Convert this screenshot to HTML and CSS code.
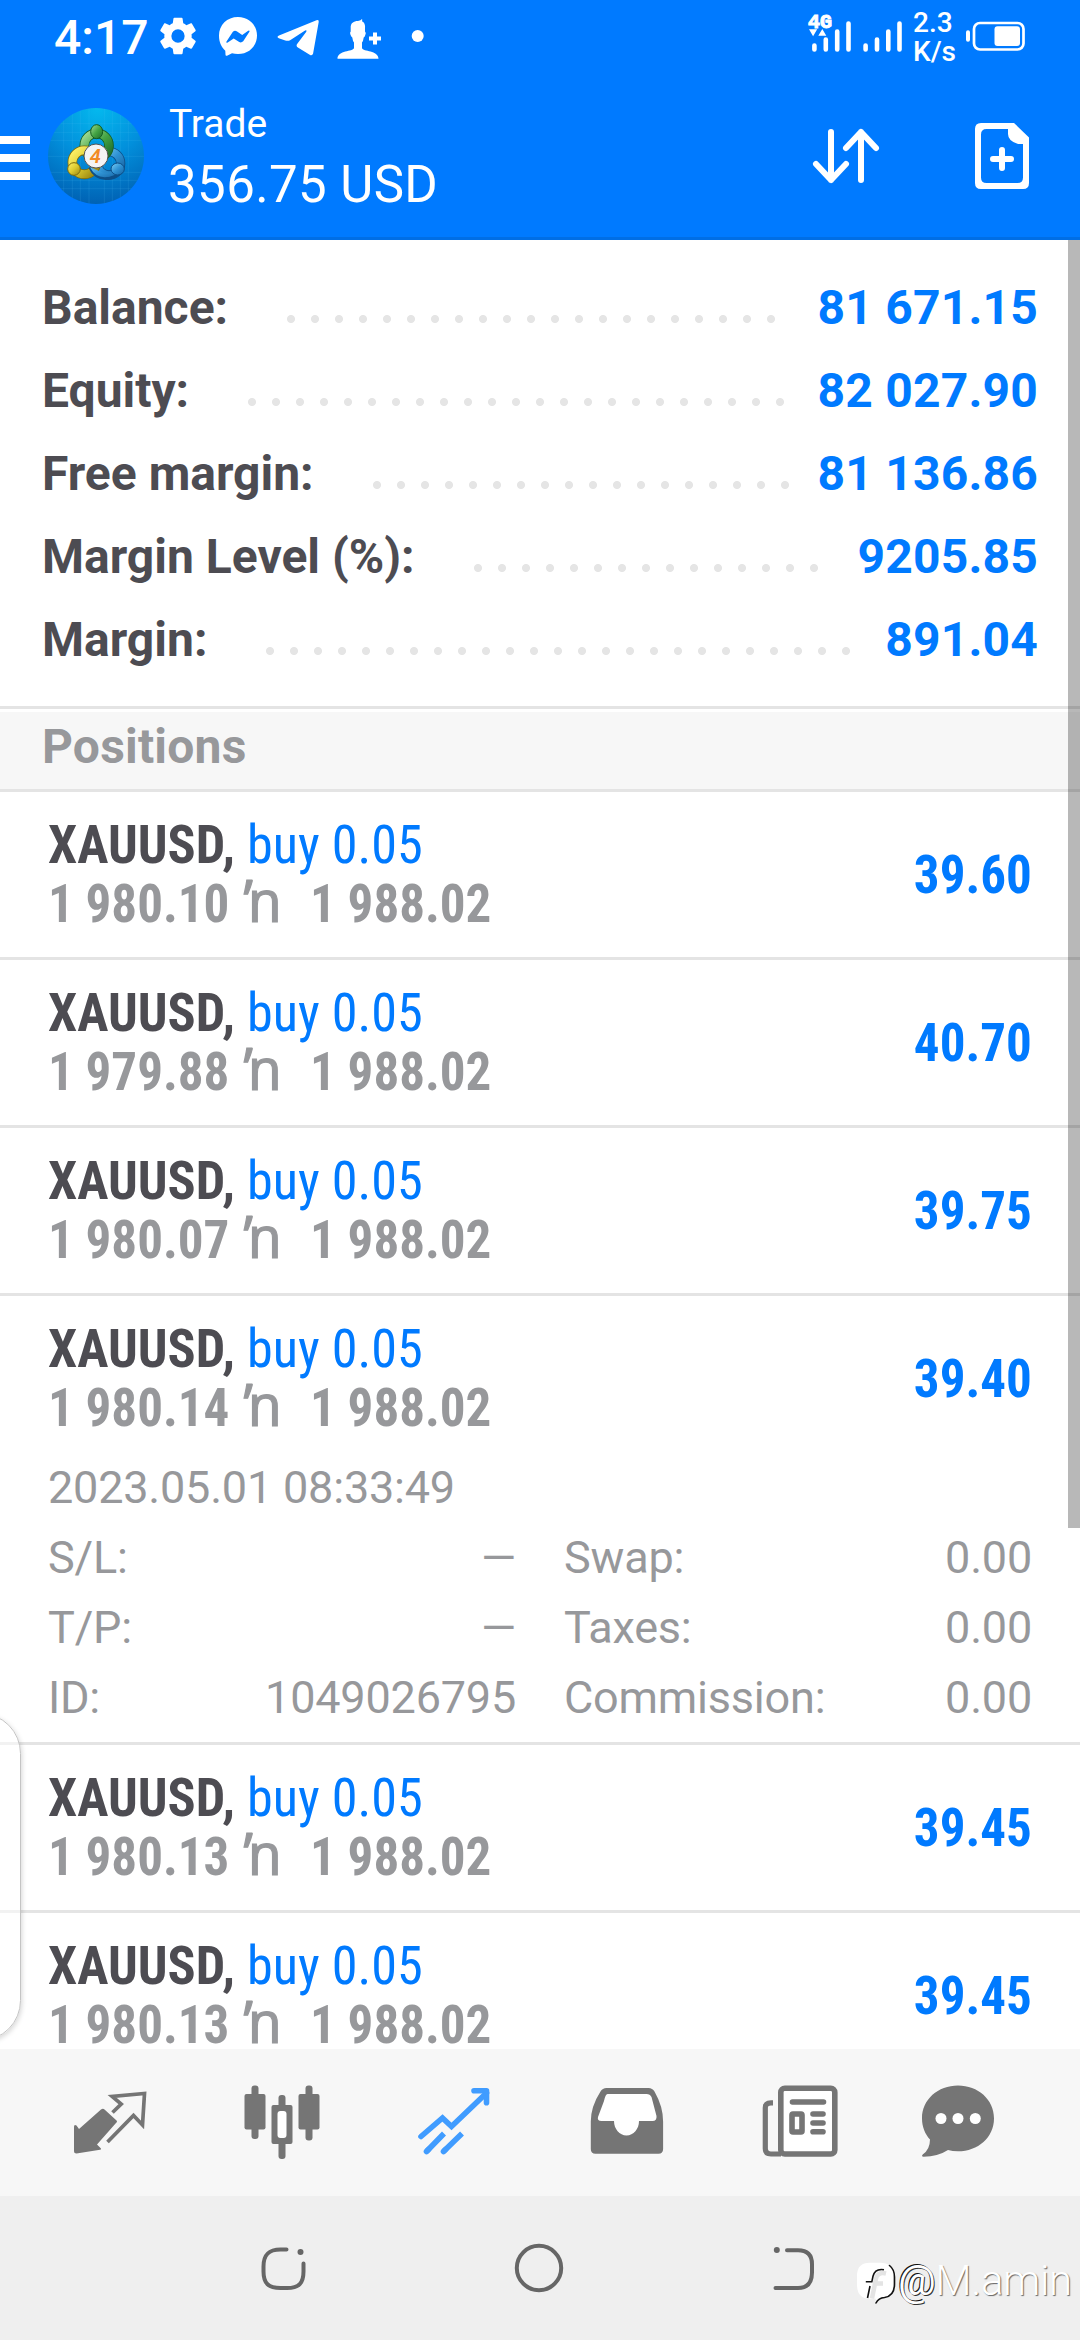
FILE: index.html
```html
<!DOCTYPE html>
<html lang="en">
<head>
<meta charset="utf-8">
<title>Trade</title>
<link rel="stylesheet" href="styles.css">
</head>
<body>
<div class="screen">
  <header class="header">
    <div class="status">
      <span class="clock">4:17</span>
      <svg class="status-icons" width="270" height="72" viewBox="156 0 270 72" fill="#fff">
        <path fill-rule="evenodd" transform="translate(155.2 13.2) scale(1.9)" d="M19.14 12.94c.04-.3.06-.61.06-.94 0-.32-.02-.64-.07-.94l2.03-1.58c.18-.14.23-.41.12-.61l-1.92-3.32c-.12-.22-.37-.29-.59-.22l-2.39.96c-.5-.38-1.03-.7-1.62-.94l-.36-2.54c-.04-.24-.24-.41-.48-.41h-3.84c-.24 0-.43.17-.47.41l-.36 2.54c-.59.24-1.13.57-1.62.94l-2.39-.96c-.22-.08-.47 0-.59.22L2.74 8.87c-.12.21-.08.47.12.61l2.03 1.58c-.05.3-.09.63-.09.94s.02.64.07.94l-2.03 1.58c-.18.14-.23.41-.12.61l1.92 3.32c.12.22.37.29.59.22l2.39-.96c.5.38 1.03.7 1.62.94l.36 2.54c.05.24.24.41.48.41h3.84c.24 0 .44-.17.47-.41l.36-2.54c.59-.24 1.13-.56 1.62-.94l2.39.96c.22.08.47 0 .59-.22l1.92-3.32c.12-.22.07-.47-.12-.61zM12 15.5a3.5 3.5 0 1 1 0-7 3.5 3.5 0 0 1 0 7z"/>
        <path fill-rule="evenodd" d="M238 17c11 0 19 8 19 18.500s-8 18.500-19 18.500c-2.200 0-4.200-.3-6-.8l-5 2.500q-1.500.5-1.500-1l-.2-4c-4-3.500-6.300-8.500-6.300-15.200C219 25 227 17 238 17zM226.500 41.500q-.5 1.800 1.200 1l6-4 5.500 3.600q2.200 1 4-.8l6.200-9.500q.5-1.700-1.200-1l-6 4.200-5.500-3.800q-2.200-1-4 .8z"/>
        <path d="M316.500 20.200q2.700-.8 2.200 1.800l-5.600 31.500q-.8 2.800-3.400 1.300l-11.800-7.300q-2.300-1.800-.6-3.800l9-12q.8-2-1.200-1.300l-14.600 9.600q-2.500 1.400-5.200.5l-6.500-2.200q-2.700-1.200.2-2.700z"/>
        <path d="M358 21q3-.5 4-2 .5 1 0 2.300 3.500 1.300 3 7.200v3q1.500 1 .3 3.500-.6 2-1.600 2.500-.4 3.500-1.700 5v5.500c1 4 16.500 2 16.500 10.800h-41c0-8.800 15.500-6.800 16.500-10.800v-5.500q-1.300-1.500-1.700-5-1.400-.8-1.900-3-.8-2.200.3-3V28c-.3-5 3-7 7.300-7zM373 32.500h4v4h4v4h-4v4h-4v-4h-4v-4h4z"/>
        <circle cx="417.700" cy="36" r="6"/>
      </svg>
      <span class="spacer"></span>
      <svg width="102" height="72" viewBox="804 0 102 72">
        <text class="net" x="808" y="28" textLength="24" lengthAdjust="spacingAndGlyphs">4G</text>
        <path fill="#fff" d="M809 29.300h8.200l-4.100 7zM822.300 29l4 6.800h-8z"/>
        <path stroke="#fff" stroke-width="4.600" stroke-linecap="round" d="M814.400 45.500v4M825.800 39.500v10M837.200 31.500v18M848.500 23.500v26M865.600 45.500v4M877 39.500v10M888.300 31.500v18M899.500 23.500v26"/>
      </svg>
      <span class="speed">2.3<br>K/s</span>
      <svg width="64" height="72" viewBox="964 0 64 72" fill="none">
        <path stroke="#fff" stroke-width="4" stroke-linecap="round" d="M968 32.300v7.500"/>
        <rect x="974" y="23" width="49.500" height="26.500" rx="6" stroke="#fff" stroke-width="2.700"/>
        <rect x="994.500" y="26.300" width="25.500" height="19.700" rx="3" fill="#fff"/>
      </svg>
    </div>
    <div class="appbar">
      <svg class="menu" width="30" height="44" viewBox="0 0 30 44" fill="#fff"><path d="M0 0h30v8H0zM0 18h30v8H0zM0 36h30v8H0z"/></svg>
      <svg class="logo" width="96" height="96" viewBox="24 24 288 288">
        <defs>
          <radialGradient id="sky" cx=".52" cy="0" r="1"><stop offset="0" stop-color="#04b9ee"/><stop offset=".5" stop-color="#0290dc"/><stop offset="1" stop-color="#0062b4"/></radialGradient>
          <linearGradient id="g" x1="0" y1="0" x2="1" y2="1"><stop offset="0" stop-color="#a5dc96"/><stop offset=".5" stop-color="#45a545"/><stop offset="1" stop-color="#1d6a28"/></linearGradient>
          <linearGradient id="y" x1="0" y1="0" x2="1" y2="1"><stop offset="0" stop-color="#fff26a"/><stop offset=".5" stop-color="#dccb30"/><stop offset="1" stop-color="#97830f"/></linearGradient>
          <linearGradient id="b" x1="0" y1="0" x2="1" y2="1"><stop offset="0" stop-color="#7cd0f7"/><stop offset=".5" stop-color="#2f92d3"/><stop offset="1" stop-color="#14609f"/></linearGradient>
          <clipPath id="disc"><circle cx="168" cy="168" r="144"/></clipPath>
        </defs>
        <g clip-path="url(#disc)">
          <rect x="24" y="24" width="288" height="288" fill="url(#sky)"/>
          <path stroke="#59c3f5" stroke-opacity=".22" stroke-width="2" d="M71 24v288M97 24v288M121 24v288M147 24v288M193 24v288M217 24v288M241 24v288M265 24v288M24 71h288M24 97h288M24 121h288M24 169h288M24 217h288M24 241h288M24 266h288"/>
        </g>
        <circle cx="207" cy="190" r="35" fill="none" stroke="#0d4f88" stroke-width="28"/>
        <circle cx="207" cy="190" r="35" fill="none" stroke="url(#b)" stroke-width="23"/>
        <circle cx="170" cy="137" r="37" fill="none" stroke="#155c20" stroke-width="29"/>
        <circle cx="170" cy="137" r="37" fill="none" stroke="url(#g)" stroke-width="24"/>
        <circle cx="133" cy="187" r="36" fill="none" stroke="#7b6a0b" stroke-width="29"/>
        <circle cx="133" cy="187" r="36" fill="none" stroke="url(#y)" stroke-width="24"/>
        <path d="M150 202q18 38 58 32 34-6 39-34" fill="none" stroke="#0d4f88" stroke-width="10"/>
        <path d="M150 202q18 36 58 28 34-6 37-34-20 25-55 22z" fill="url(#b)"/>
        <ellipse cx="170" cy="95" rx="18" ry="21" fill="url(#g)" stroke="#155c20" stroke-width="3"/>
        <ellipse cx="102" cy="207" rx="19" ry="19" fill="url(#y)" stroke="#7b6a0b" stroke-width="3"/>
        <ellipse cx="233" cy="207" rx="20" ry="18" fill="url(#b)" stroke="#0d4f88" stroke-width="3"/>
        <circle cx="168" cy="168" r="36" fill="#f4f4f4" stroke="#555" stroke-width="3"/>
        <text class="logo-digit" x="166" y="190">4</text>
      </svg>
      <div class="titles">
        <div class="title">Trade</div>
        <div class="total">356.75 USD</div>
      </div>
      <svg class="actions" width="250" height="84" viewBox="803 120 250 84" fill="none">
        <path stroke="#fff" stroke-width="6" stroke-linecap="round" stroke-linejoin="round" d="M831 132v48M816 164l15 16 15-16M861 180v-48M846 148l15-16 15 16"/>
        <path fill="#fff" fill-rule="evenodd" d="M981 123h33l15 14.500V183q0 6-6 6h-42q-6 0-6-6v-54q0-6 6-6zm5.500 6q-5.500 0-5.500 5.500v43q0 5.500 5.500 5.500h31q5.500 0 5.500-5.500V144h-5q-10-3-10-10v-5z"/>
        <path stroke="#fff" stroke-width="6" stroke-linecap="round" d="M1002 150v18M993 159h18"/>
      </svg>
    </div>
  </header>

  <main class="content">
    <section class="summary">
      <div class="sum-row"><span>Balance:</span><i class="dots"></i><b>81 671.15</b></div>
      <div class="sum-row"><span>Equity:</span><i class="dots"></i><b>82 027.90</b></div>
      <div class="sum-row"><span>Free margin:</span><i class="dots"></i><b>81 136.86</b></div>
      <div class="sum-row"><span>Margin Level (%):</span><i class="dots"></i><b>9205.85</b></div>
      <div class="sum-row"><span>Margin:</span><i class="dots"></i><b>891.04</b></div>
    </section>
    <h2 class="section">Positions</h2>

    <article class="position"><div class="main"><div class="info"><div class="symbol"><b>XAUUSD,</b> <span class="side">buy 0.05</span></div><div class="prices">1 980.10 <span class="arrow">ŉ</span>1 988.02</div></div><div class="profit">39.60</div></div></article>
    <article class="position"><div class="main"><div class="info"><div class="symbol"><b>XAUUSD,</b> <span class="side">buy 0.05</span></div><div class="prices">1 979.88 <span class="arrow">ŉ</span>1 988.02</div></div><div class="profit">40.70</div></div></article>
    <article class="position"><div class="main"><div class="info"><div class="symbol"><b>XAUUSD,</b> <span class="side">buy 0.05</span></div><div class="prices">1 980.07 <span class="arrow">ŉ</span>1 988.02</div></div><div class="profit">39.75</div></div></article>
    <article class="position">
      <div class="main"><div class="info"><div class="symbol"><b>XAUUSD,</b> <span class="side">buy 0.05</span></div><div class="prices">1 980.14 <span class="arrow">ŉ</span>1 988.02</div></div><div class="profit">39.40</div></div>
      <div class="details">
        <div class="date">2023.05.01 08:33:49</div>
        <div class="pair"><span>S/L:</span><span>—</span></div>
        <div class="pair"><span>Swap:</span><span>0.00</span></div>
        <div class="pair"><span>T/P:</span><span>—</span></div>
        <div class="pair"><span>Taxes:</span><span>0.00</span></div>
        <div class="pair"><span>ID:</span><span>1049026795</span></div>
        <div class="pair"><span>Commission:</span><span>0.00</span></div>
      </div>
    </article>
    <article class="position"><div class="main"><div class="info"><div class="symbol"><b>XAUUSD,</b> <span class="side">buy 0.05</span></div><div class="prices">1 980.13 <span class="arrow">ŉ</span>1 988.02</div></div><div class="profit">39.45</div></div></article>
    <article class="position"><div class="main"><div class="info"><div class="symbol"><b>XAUUSD,</b> <span class="side">buy 0.05</span></div><div class="prices">1 980.13 <span class="arrow">ŉ</span>1 988.02</div></div><div class="profit">39.45</div></div></article>
    <div class="scrollbar"></div>
    <div class="edge-panel"></div>
  </main>

  <nav class="tabs">
    <svg width="84" height="84" viewBox="67 2080 84 84">
      <path fill="#757575" d="M74 2127q0-3 2.500-1.500l2.500 3.500 22-19.500q2-1.500 3.500 0l11.500 10.500q2 1.500 0 3l-19 21.500 3.500 3.500q1.500 1.500-.5 1.800l-23.500 3.600q-2.500 0-2.500-2.500z"/>
      <path fill="none" stroke="#757575" stroke-width="3.700" d="M112.500 2112.500l8.700-8.500-9-7.500 32.300-3-2 31.500-9-9.500L107.500 2142"/>
    </svg>
    <svg width="84" height="84" viewBox="239.500 2080 84 84" fill="#757575">
      <rect x="251" y="2085.500" width="7" height="53.500" rx="3"/><rect x="244" y="2094" width="21" height="35.500" rx="2"/>
      <rect x="305" y="2085.500" width="7" height="55" rx="3"/><rect x="298" y="2094" width="21" height="35.500" rx="2"/>
      <rect x="278" y="2095" width="7" height="64" rx="3"/><rect x="271" y="2105" width="21" height="39" rx="2"/>
      <rect x="277" y="2111" width="9" height="27" rx="3" fill="#fff"/>
    </svg>
    <svg width="84" height="84" viewBox="412 2080 84 84" fill="none" stroke="#409cff" stroke-width="5.600" stroke-linecap="round">
      <path d="M421 2136.500l21.500-18.500 9 8.500 35-33.500"/><path d="M474 2090.800h12.500v12" stroke-linejoin="round"/>
      <path stroke-linecap="butt" d="M426.500 2151.500l17.500-18M443.500 2151.500l18.500-18"/><path d="M426.500 2151.500l2-2M443.500 2151.500l2-2"/>
    </svg>
    <svg width="84" height="84" viewBox="584.500 2080 84 84">
      <path fill="#757575" d="M606 2088h42q4 0 6 3.500 8.600 15 8.600 30V2149q0 4.700-4.700 4.700H595q-4.700 0-4.700-4.700v-27.500q0-15 9.700-30 2-3.500 6-3.500z"/>
      <path fill="#fff" d="M607 2094h39q3.500 0 5 3l5 19q.5 5-4 5h-13.500c0 8-5.500 14.500-12.500 14.500s-12.500-6.500-12.500-14.500H601q-4.500 0-3.500-4l6-16q1.500-7 3.500-7z"/>
    </svg>
    <svg width="84" height="84" viewBox="757 2080 84 84" fill="none">
      <rect x="780.800" y="2088.300" width="54" height="65.700" rx="4" fill="#fff" stroke="#757575" stroke-width="5.600"/>
      <path stroke="#757575" stroke-width="5.200" d="M773 2102.800h-2q-5.700 0-5.700 5v40.700q0 5.500 5.700 5.500h10"/>
      <path stroke="#757575" stroke-width="5.600" stroke-linecap="round" d="M792.500 2102h31M813 2114h10M813 2123h10M813 2131.800h10"/>
      <rect x="792" y="2114" width="10" height="18" stroke="#757575" stroke-width="5.600" rx="1"/>
    </svg>
    <svg class="tab-last" width="84" height="84" viewBox="916 2080 84 84">
      <path fill="#757575" d="M958 2085.600c20 0 36 14 36 32.800s-16 32.800-36 32.800q-5.500 0-10-1.200-10 6.500-24.500 6.800-2.500-.3-.8-2.300 7.300-5 7.300-15c-5-5.500-8-13-8-21.100 0-18.800 16-32.800 36-32.800z"/>
      <g fill="#fff"><circle cx="941" cy="2118.500" r="5.500"/><circle cx="958" cy="2118.500" r="5.500"/><circle cx="975.300" cy="2118.500" r="5.500"/></g>
    </svg>
  </nav>

  <div class="sysnav">
    <svg width="60" height="60" viewBox="254.500 2238 60 60" fill="none" stroke="#666" stroke-width="4" stroke-linecap="round"><path d="M287 2249.500h-6c-12 0-17 5-17 17v5c0 12 5 16.500 17 16.500h6.500c12 0 16.500-5 16.500-16.500V2263.500"/><circle cx="301" cy="2252" r="3" fill="#666" stroke="none"/></svg>
    <svg width="60" height="60" viewBox="510 2238 60 60" fill="none" stroke="#666" stroke-width="4"><circle cx="540" cy="2268" r="22.200"/></svg>
    <svg width="60" height="60" viewBox="764 2238 60 60" fill="none" stroke="#666" stroke-width="4" stroke-linecap="round"><path d="M787 2250.200h11c10 0 14 5 14 14v8c0 10-4 15.800-14 15.800h-22.500"/><circle cx="776.800" cy="2250" r="3" fill="#666" stroke="none"/></svg>
    <div class="watermark">
      <svg width="42" height="46" viewBox="855 2260 42 46">
        <path fill="#fff" d="M870 2262.700h10q13 0 13 13v9q0 13-11 13.500-4 .5-6.500 3.500l.5-3h-6q-13 0-13-14v-9q0-13 13-13z"/>
        <path fill="none" stroke="#111" stroke-width="1.600" stroke-linecap="round" d="M889.500 2265.500q5 4 5 11.500v7q0 12-10 13.500-6 .5-8.500 5.500"/>
        <path fill="none" stroke="#e4e4e4" stroke-width="4.500" d="M886 2273.500q-8-2-10 5l-4 20M873 2283.500h10"/>
        <path fill="none" stroke="#111" stroke-width="1.600" d="M884 2269.800q-9-1.500-11 6.500l-1.200 5.500h-6M870 2286l-2.500 12"/>
      </svg>
      <span><span class="at">@</span>M.amin</span>
    </div>
  </div>
</div>
</body>
</html>
```
FILE: styles.css
```css
* { box-sizing: border-box; }
body {
  margin: 0;
  background: #fff;
  font-family: Roboto, "Liberation Sans", sans-serif;
}
svg { display: block; flex: none; }
.screen {
  width: 1080px;
  height: 2340px;
  display: flex;
  flex-direction: column;
  overflow: hidden;
}

/* header */
.header {
  height: 240px;
  flex: none;
  background: #007aff;
  border-bottom: 3px solid #006ee5;
  color: #fff;
}
.status {
  height: 72px;
  display: flex;
  padding: 0 52px 0 54px;
}
.clock {
  width: 102px;
  font-size: 48px;
  font-weight: 500;
  line-height: 75px;
}
.spacer { flex: 1; }
.net { font: 700 20px "Liberation Mono", monospace; fill: #fff; stroke: #fff; stroke-width: 1; }
.speed {
  width: 58px;
  padding: 8px 0 0 7px;
  font-size: 28px;
  font-weight: 500;
  line-height: 29px;
}
.appbar {
  height: 165px;
  display: flex;
  align-items: flex-start;
  padding-right: 27px;
}
.menu { margin: 64px 18px 0 0; }
.logo { margin-top: 36px; }
.logo-digit { font: italic 600 60px Roboto, sans-serif; fill: #f28b24; text-anchor: middle; }
.titles { margin: 29px auto 0 25px; }
.title { font-size: 39px; line-height: 46px; }
.total { font-size: 51px; line-height: 75px; letter-spacing: .4px; margin-left: -1px; }
.actions { margin-top: 48px; }

/* content */
.content {
  position: relative;
  height: 1809px;
  flex: none;
  overflow: hidden;
}
.summary {
  padding: 26px 42px 25px;
  border-bottom: 3px solid #e4e4e4;
}
.sum-row {
  height: 83px;
  display: flex;
  font-size: 48px;
  font-weight: 700;
  line-height: 83px;
  color: #4d4c52;
}
.sum-row b { color: #007aff; font-weight: 700; letter-spacing: .2px; }
.dots {
  flex: 1;
  height: 8px;
  margin: 49px 29px 0 59px;
  background: radial-gradient(circle at 4px 4px, #e5e5e5 3.6px, transparent 4.400px) 0 0 / 24px 8px repeat-x;
}
.section {
  height: 83px;
  margin: 0;
  padding-left: 42px;
  border-top: 3px solid #fff;
  border-bottom: 3px solid #e4e4e4;
  background: #f7f7f7;
  color: #97989b;
  font-size: 48px;
  line-height: 69px;
  letter-spacing: .2px;
}
.position { border-bottom: 3px solid #e4e4e4; }
.main {
  height: 165px;
  display: flex;
  justify-content: space-between;
  padding: 0 48px;
  font-family: "Roboto Condensed", Roboto, sans-serif;
  font-size: 54px;
}
.info { padding-top: 23px; line-height: 59px; color: #4d4c52; }
.info > div { height: 59px; white-space: nowrap; transform-origin: left; }
.symbol { transform: scaleX(.967); }
.side { color: #007aff; }
.prices { color: #97989b; font-weight: 700; transform: scaleX(.945); }
.arrow {
  display: inline-block;
  width: 70px;
  margin-left: 3px;
  font-family: "Noto Sans", sans-serif;
  font-size: 58px;
  font-weight: 400;
  line-height: 50px;
  -webkit-text-stroke: 1.2px #97989b;
}
.profit {
  color: #007aff;
  font-weight: 700;
  line-height: 165px;
  transform: scaleX(.945);
  transform-origin: right;
}
.details {
  display: grid;
  grid-template-columns: 468px 468px;
  column-gap: 48px;
  margin-top: -8px;
  padding: 0 48px 9px;
  color: #97989b;
  font-size: 45px;
  line-height: 70px;
  letter-spacing: -.2px;
}
.date { grid-column: 1 / 3; }
.pair { display: flex; justify-content: space-between; }

.scrollbar {
  position: absolute;
  right: 0;
  top: 0;
  width: 12px;
  height: 1288px;
  background: rgba(0, 0, 0, .28);
}
.edge-panel {
  position: absolute;
  left: -60px;
  top: 1473px;
  width: 81px;
  height: 328px;
  border: 1px solid #c4c4c4;
  border-radius: 44px;
  background: rgba(255, 255, 255, .5);
  box-shadow: 1px 2px 5px rgba(0, 0, 0, .16);
}

/* bottom bars */
.tabs {
  height: 147px;
  flex: none;
  display: flex;
  align-items: flex-start;
  gap: 88.5px;
  padding: 31px 0 0 67px;
  background: #f7f7f7;
}
.tab-last { margin-left: -13.5px; }
.sysnav {
  position: relative;
  height: 144px;
  flex: none;
  display: flex;
  align-items: center;
  justify-content: space-between;
  padding: 0 256px 0 254px;
  background: #efefef;
}
.watermark {
  position: absolute;
  left: 855px;
  top: 64px;
  display: flex;
  gap: 1px;
  color: #fff;
  font-size: 42px;
  font-weight: 300;
  line-height: 42px;
  letter-spacing: -.4px;
  white-space: nowrap;
  text-shadow: 1px 1px 1px #666;
}
.at { font-weight: 400; text-shadow: -1px -1px 0 #111, 1px 1px 0 #333; }
```
